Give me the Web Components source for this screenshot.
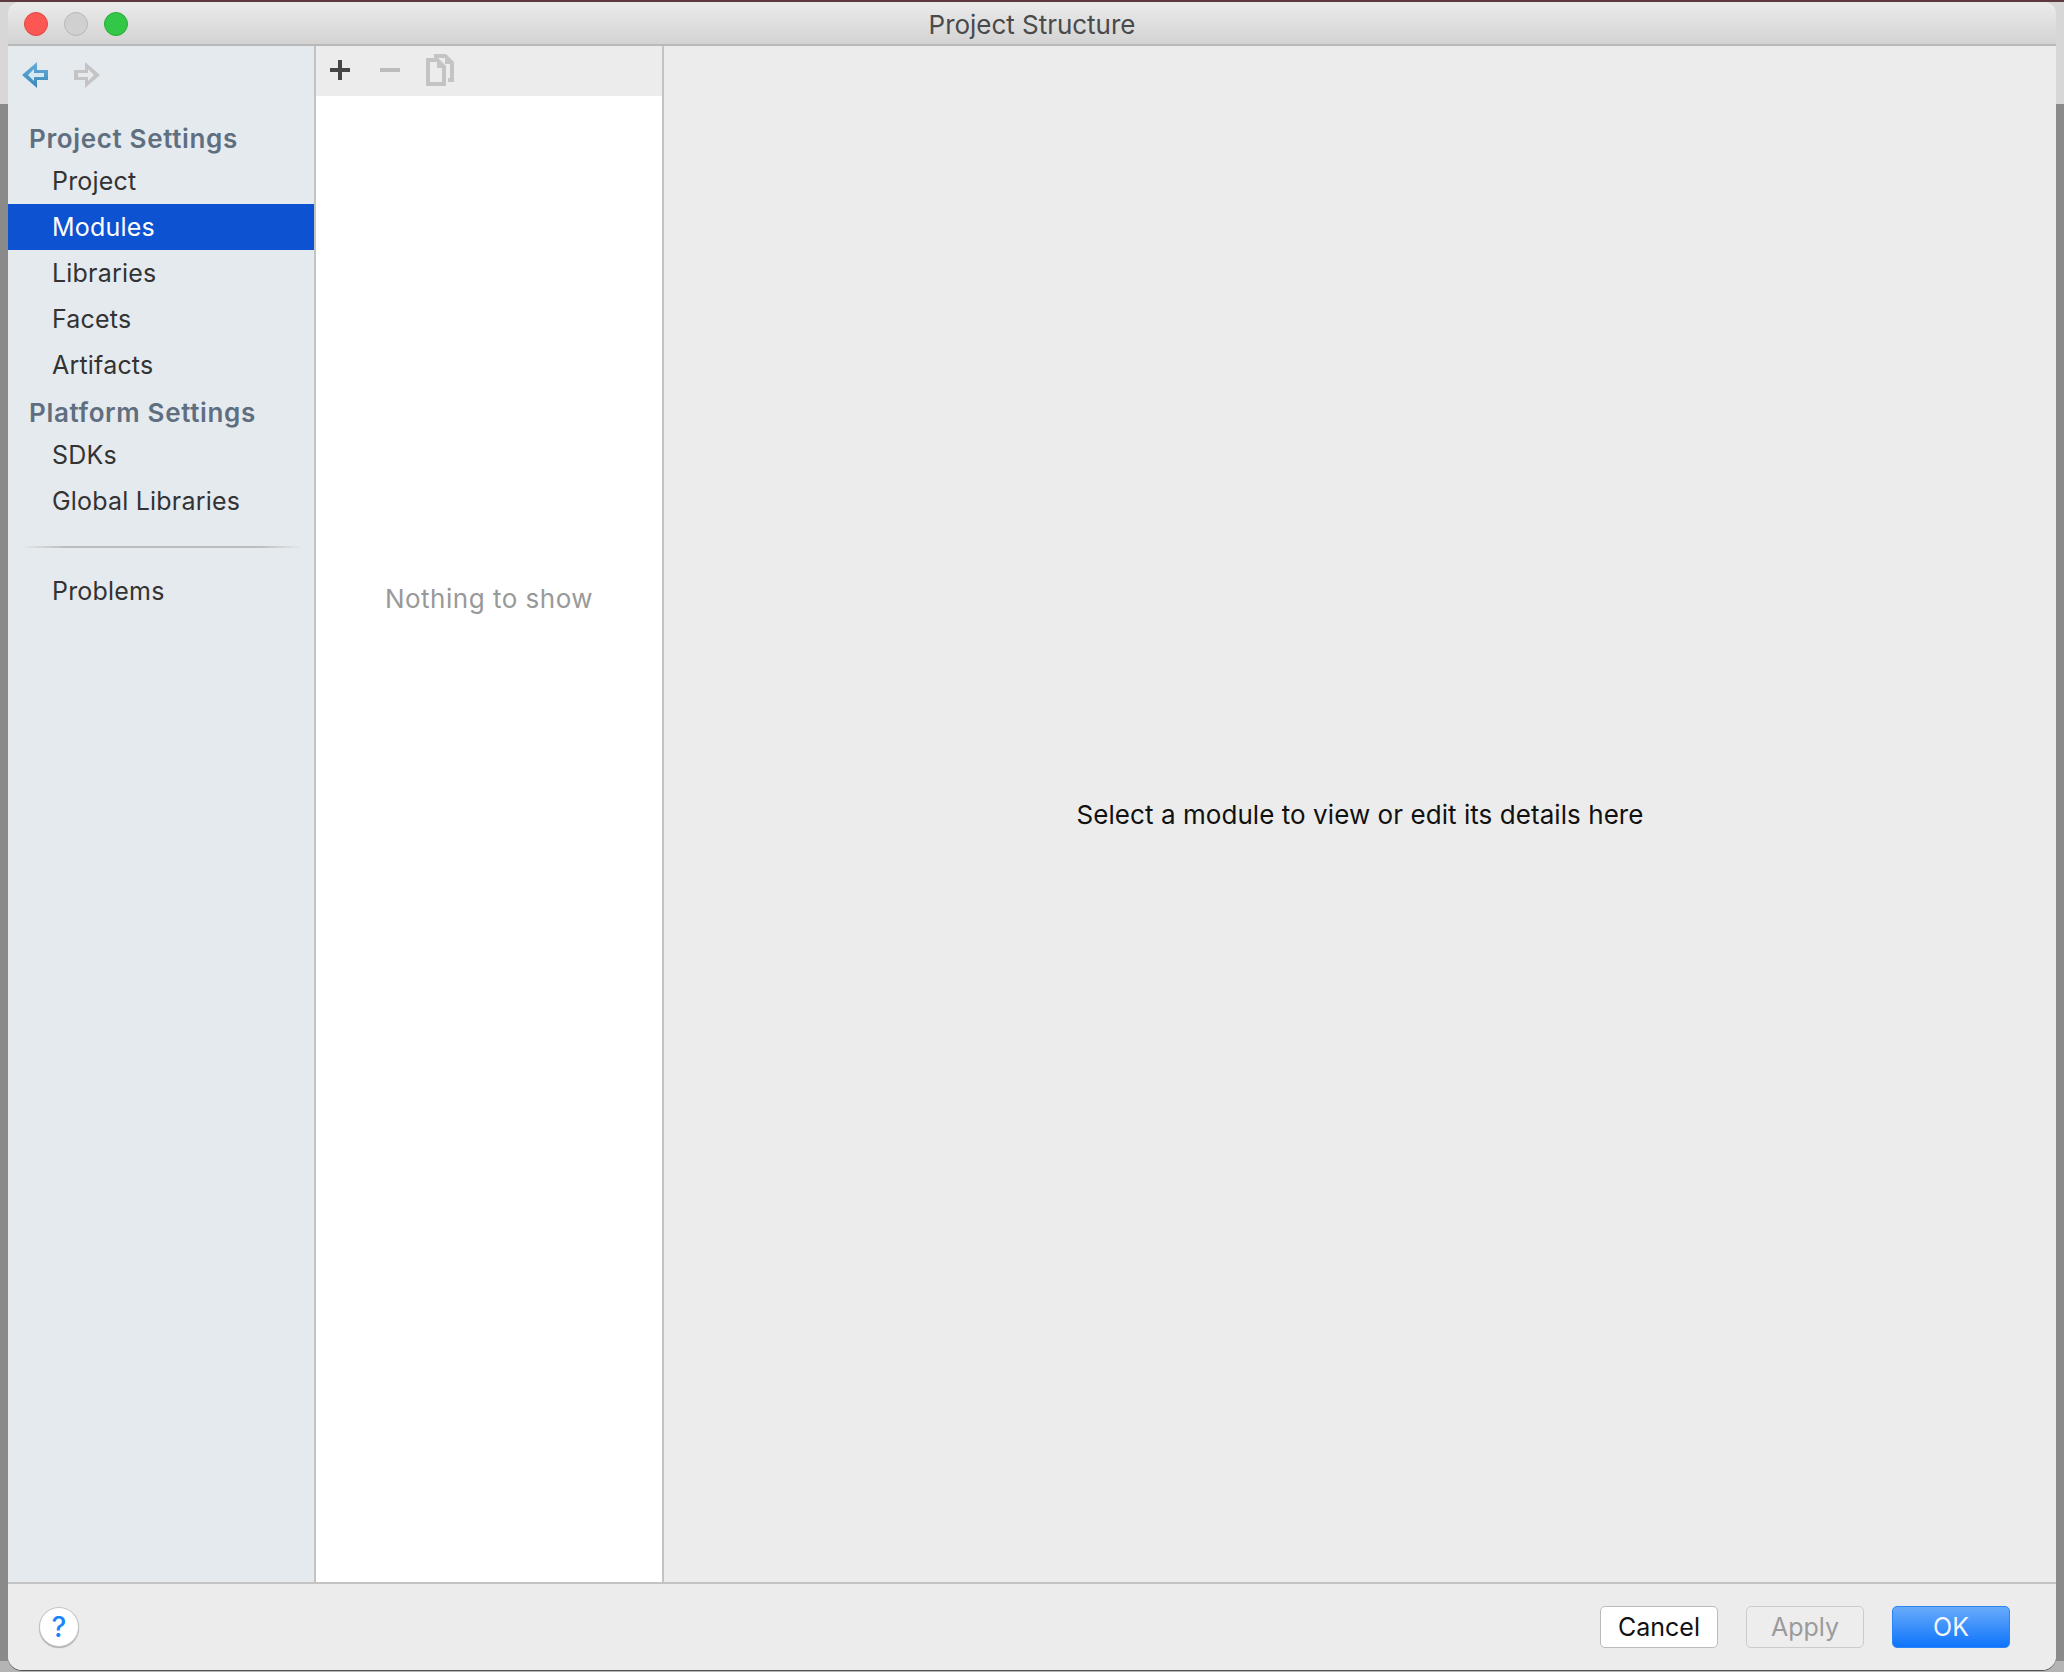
<!DOCTYPE html>
<html><head><meta charset="utf-8"><style>
html,body{margin:0;height:100%}
body{width:2064px;height:1672px;overflow:hidden;box-sizing:border-box;padding:2px 8px;background:linear-gradient(#5c3a40 0,#5c3a40 2px,#d8d6d6 2px,#d8d6d6 104px,#8a8a8a 104px,#8a8a8a 1661px,#b4b4b4 1661px);font-family:Inter,"Liberation Sans",sans-serif}
</style></head><body>
<template id="tw"><style>
:host{display:flex;flex-direction:column;width:2048px;height:1668px;background:#ececec;border-radius:12px 12px 14px 14px;overflow:hidden;box-shadow:0 1px 0 #555}
.main{flex:1;display:flex;min-height:0}
</style><slot name="title"></slot><div class="main"><slot name="side"></slot><slot name="list"></slot><slot name="detail"></slot></div><slot name="foot"></slot></template>

<template id="tt"><style>
:host{display:flex;align-items:center;position:relative;height:42px;box-sizing:border-box;height:44px;padding-top:2px;flex:none;background:linear-gradient(#ebebeb,#d3d3d3);border-bottom:2px solid #b9b9b9;justify-content:center;font-size:26px;letter-spacing:-.03px;color:#4a4a4a}
.l{position:absolute;left:16px;top:10px;display:flex;gap:16px}
i{display:block;width:24px;height:24px;border-radius:50%;box-sizing:border-box}
.r{background:#fc5753;border:1px solid #df4744}.y{background:#d0d0d0;border:1px solid #b8b8b8}.g{background:#33c748;border:1px solid #27aa35}
</style><div class="l"><i class="r"></i><i class="y"></i><i class="g"></i></div><slot></slot></template>

<template id="sb"><style>
:host{display:block;width:306px;flex:none;background:#e5eaef;border-right:2px solid #c3c3c3}
.nav{display:flex;gap:24px;padding:14px 0 0 13px;height:30px}
.c{padding-top:29px}
svg{display:block}
</style><div class="nav">
<svg width="28" height="30" viewBox="0 0 28 30"><defs><linearGradient id="b" x1="0" y1="0" x2="0" y2="1"><stop offset="0" stop-color="#69afdc"/><stop offset="1" stop-color="#3a86b8"/></linearGradient></defs><path d="M16 2 1 15 16 28V20H27V10H16Z" fill="url(#b)"/><path d="M13 9 7 15 13 21V17H23V13H13Z" fill="#d8e8f3"/></svg>
<svg width="28" height="30" viewBox="0 0 28 30"><path d="M1 10H12V2L27 15 12 28V20H1Z" fill="#c4c4c4"/><path d="M15 9 21 15 15 21V17H5V13H15Z" fill="#e5eaef"/></svg>
</div><div class="c"><slot></slot></div></template>

<template id="sh"><style>:host{display:flex;align-items:center;height:39px;padding-left:21px;font-size:26px;font-weight:600;letter-spacing:.65px;color:#606f7f}</style><slot></slot></template>

<template id="si"><style>
:host{display:flex;align-items:center;height:46px;padding-left:44px;font-size:25px;letter-spacing:.2px;color:#333}
:host([selected]){background:#0c52d1;color:#fff}
</style><slot></slot></template>

<template id="sd"><style>:host{display:block;height:2px;margin:22px 12px 20px 14px;background:linear-gradient(90deg,#e5eaef,#bdbdbd 15%,#bdbdbd 85%,#e5eaef)}</style></template>

<template id="ml"><style>
:host{display:flex;flex-direction:column;width:346px;flex:none;background:#fff;border-right:2px solid #c3c3c3}
.tb{height:50px;flex:none;background:#ececec;display:flex;align-items:flex-start;padding:8px 0 0 14px;box-sizing:border-box}
.tb svg{display:block}
.e{flex:1;display:flex;align-items:center;justify-content:center;color:#999;font-size:26px;letter-spacing:.5px;padding-bottom:482px}
</style><div class="tb">
<svg width="20" height="32" viewBox="0 0 20 32" style="margin-right:30px"><path d="M8 6h4v8h8v4h-8v8H8v-8H0v-4h8z" fill="#464646"/></svg>
<svg width="20" height="32" viewBox="0 0 20 32" style="margin-right:26px"><rect y="14" width="20" height="4" fill="#bcbcbc"/></svg>
<svg width="28" height="32" viewBox="0 0 28 32"><path fill-rule="evenodd" fill="#c4c4c4" d="M0 4H12L20 12V32H0ZM4 8V28H16V14H11V8Z"/><path fill="#c4c4c4" d="M8 0H20L28 8V28H22V24H24V10H19V4H8Z"/></svg>
</div><div class="e"><slot></slot></div></template>

<template id="dp"><style>:host{flex:1;display:flex;align-items:center;justify-content:center;background:#ececec;color:#111;font-size:26px;letter-spacing:.06px}</style><slot></slot></template>

<template id="ft"><style>
:host{display:flex;align-items:center;height:86px;flex:none;border-top:2px solid #c3c3c3;background:#ececec;padding:0 46px 0 31px;gap:28px}
.h{width:40px;height:40px;border-radius:50%;background:#fff;border:1px solid #c4c4c4;box-shadow:0 1px 1px #aaa;box-sizing:border-box;display:flex;align-items:center;justify-content:center;color:#1a84fb;font-size:28px;font-weight:500;margin-right:auto}
</style><div class="h">?</div><slot></slot></template>

<template id="bt"><style>
:host{display:flex;align-items:center;justify-content:center;width:118px;height:42px;box-sizing:border-box;border-radius:5px;border:1px solid #bbb;background:#fff;color:#111;font-size:25px}
:host([disabled]){background:#ededed;color:#9b9b9b;border-color:#ccc}
:host([primary]){background:linear-gradient(#69abfb,#0e74fb);border-color:#2a84f5;color:#f2f6ff}
</style><slot></slot></template>

<x-window>
<x-title slot="title">Project Structure</x-title>
<x-side slot="side">
<x-head>Project Settings</x-head>
<x-item>Project</x-item><x-item selected>Modules</x-item><x-item>Libraries</x-item><x-item>Facets</x-item><x-item>Artifacts</x-item>
<x-head style="margin-top:5px">Platform Settings</x-head>
<x-item>SDKs</x-item><x-item>Global Libraries</x-item>
<x-sep></x-sep>
<x-item>Problems</x-item>
</x-side>
<x-list slot="list">Nothing to show</x-list>
<x-detail slot="detail">Select a module to view or edit its details here</x-detail>
<x-foot slot="foot"><x-btn>Cancel</x-btn><x-btn disabled>Apply</x-btn><x-btn primary>OK</x-btn></x-foot>
</x-window>
<script>
const m={'x-window':'tw','x-title':'tt','x-side':'sb','x-head':'sh','x-item':'si','x-sep':'sd','x-list':'ml','x-detail':'dp','x-foot':'ft','x-btn':'bt'};
for(const [n,t] of Object.entries(m)){customElements.define(n,class extends HTMLElement{constructor(){super();this.attachShadow({mode:'open'}).appendChild(document.getElementById(t).content.cloneNode(true))}})}
</script>
</body></html>
